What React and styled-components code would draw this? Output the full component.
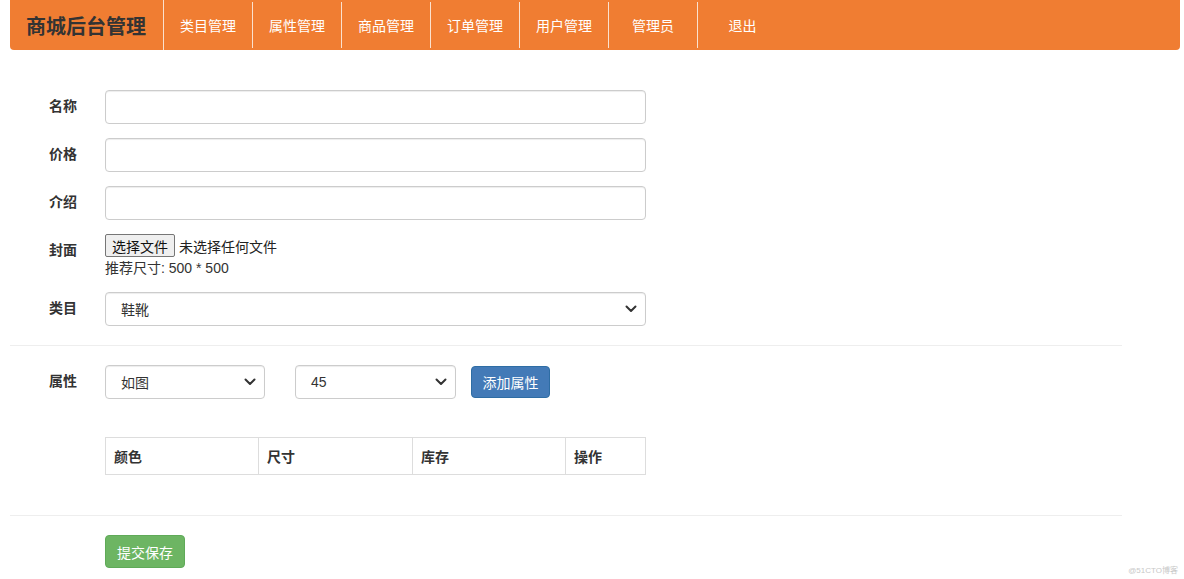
import React from 'react';
import styled, { createGlobalStyle } from 'styled-components';

const GlobalStyle = createGlobalStyle`
  body {
    margin: 0;
    background: #fff;
    font-family: "Liberation Sans", "Noto Sans CJK SC", sans-serif;
    font-size: 14px;
    color: #333;
  }
`;

const navItems = ['类目管理', '属性管理', '商品管理', '订单管理', '用户管理', '管理员', '退出'];

function Chevron() {
  return (
    <svg width="12" height="8" viewBox="0 0 12 8">
      <path d="M1.5 1.5 L6 6 L10.5 1.5" fill="none" stroke="#333" strokeWidth="2" strokeLinecap="round" strokeLinejoin="round" />
    </svg>
  );
}

function Select({ value, width }) {
  return (
    <SelectBox width={width}>
      <span>{value}</span>
      <ChevronWrap><Chevron /></ChevronWrap>
    </SelectBox>
  );
}

export default function App() {
  return (
    <Page>
      <GlobalStyle />
      <NavBar>
        <Brand>商城后台管理</Brand>
        {navItems.map((item) => (
          <NavItem key={item}>{item}</NavItem>
        ))}
      </NavBar>

      <Form>
        <Row>
          <Label>名称</Label>
          <Input />
        </Row>
        <Row>
          <Label>价格</Label>
          <Input />
        </Row>
        <Row>
          <Label>介绍</Label>
          <Input />
        </Row>
        <Row>
          <Label>封面</Label>
          <div>
            <FileLine>
              <FileButton>选择文件</FileButton>
              <span>未选择任何文件</span>
            </FileLine>
            <Hint>推荐尺寸: 500 * 500</Hint>
          </div>
        </Row>
        <Row>
          <Label>类目</Label>
          <Select value="鞋靴" />
        </Row>

        <Divider />

        <Row>
          <Label>属性</Label>
          <AttrLine>
            <Select value="如图" width={160} />
            <Select value="45" width={161} />
            <BlueButton>添加属性</BlueButton>
          </AttrLine>
        </Row>

        <Row>
          <span />
          <Table>
            <thead>
              <tr>
                <Th width={153}>颜色</Th>
                <Th width={154}>尺寸</Th>
                <Th width={153}>库存</Th>
                <Th>操作</Th>
              </tr>
            </thead>
          </Table>
        </Row>

        <Divider />

        <Row>
          <span />
          <GreenButton>提交保存</GreenButton>
        </Row>
      </Form>
      <Watermark>@51CTO博客</Watermark>
    </Page>
  );
}

const Page = styled.div`
  position: relative;
  width: 1184px;
  height: 579px;
  overflow: hidden;
`;

const NavBar = styled.div`
  margin: 0 4px 0 10px;
  height: 50px;
  background: #f07d32;
  border-radius: 0 0 4px 4px;
  display: flex;
  align-items: stretch;
`;

const Brand = styled.div`
  width: 154px;
  padding-left: 16px;
  box-sizing: border-box;
  display: flex;
  align-items: center;
  font-size: 20px;
  font-weight: bold;
  color: #333;
  border-right: 1px solid #fbe1cf;
`;

const NavItem = styled.div`
  width: 89px;
  box-sizing: border-box;
  display: flex;
  align-items: center;
  justify-content: center;
  padding-bottom: 1px;
  color: #fff;
  font-size: 14px;
  border-right: 1px solid #fbe1cf;
  margin: 2px 0;
  &:last-child {
    border-right: none;
  }
`;

const Form = styled.div`
  width: 1112px;
  margin: 40px 0 0 10px;
`;

const Row = styled.div`
  display: grid;
  grid-template-columns: 95px 541px;
  align-items: start;
  margin-bottom: 14px;
`;

const Label = styled.label`
  padding: 6px 0 0 39px;
  line-height: 20px;
  font-weight: bold;
  font-size: 14px;
`;

const Input = styled.div`
  height: 34px;
  box-sizing: border-box;
  border: 1px solid #ccc;
  border-radius: 4px;
  box-shadow: inset 0 1px 1px rgba(0, 0, 0, 0.075);
  background: #fff;
`;

const FileLine = styled.div`
  display: flex;
  align-items: center;
  gap: 4px;
  font-size: 14px;
  color: #222;
`;

const FileButton = styled.div`
  height: 23px;
  box-sizing: border-box;
  padding: 0 6px;
  display: flex;
  align-items: center;
  background: #efefef;
  border: 1px solid #767676;
  border-radius: 2px;
  color: #111;
`;

const Hint = styled.div`
  margin-top: 1px;
  line-height: 20px;
  color: #333;
`;

const SelectBox = styled.div`
  width: ${(p) => (p.width ? `${p.width}px` : '100%')};
  height: 34px;
  box-sizing: border-box;
  border: 1px solid #ccc;
  border-radius: 4px;
  box-shadow: inset 0 1px 1px rgba(0, 0, 0, 0.075);
  display: flex;
  align-items: center;
  justify-content: space-between;
  padding: 0 8px 0 15px;
  color: #333;
  font-size: 14px;
`;

const ChevronWrap = styled.span`
  display: flex;
  align-items: center;
`;

const Divider = styled.hr`
  border: none;
  border-top: 1px solid #eee;
  margin: 19px 0 19px 0;
`;

const AttrLine = styled.div`
  display: flex;
  align-items: center;
  width: 600px;
  & > :nth-child(2) {
    margin-left: 30px;
  }
  & > :nth-child(3) {
    margin-left: 15px;
  }
`;

const BlueButton = styled.button`
  height: 32px;
  width: 79px;
  padding: 0;
  border: 1px solid #2e6da4;
  border-radius: 4px;
  background: #437ab7;
  color: #fff;
  font-family: inherit;
  font-size: 14px;
`;

const GreenButton = styled.button`
  width: 80px;
  height: 33px;
  border: 1px solid #5faa58;
  border-radius: 4px;
  background: #6db563;
  color: #fff;
  font-family: inherit;
  font-size: 14px;
  padding: 0;
`;

const Table = styled.table`
  margin-top: 24px;
  margin-bottom: 21px;
  width: 541px;
  border-collapse: collapse;
`;

const Th = styled.th`
  width: ${(p) => (p.width ? `${p.width}px` : 'auto')};
  height: 37px;
  box-sizing: border-box;
  border: 1px solid #ddd;
  padding: 0 8px;
  text-align: left;
  font-weight: bold;
  font-size: 14px;
  color: #333;
`;

const Watermark = styled.div`
  position: absolute;
  right: 6px;
  bottom: 4px;
  font-size: 8px;
  color: #c8c8c8;
`;
